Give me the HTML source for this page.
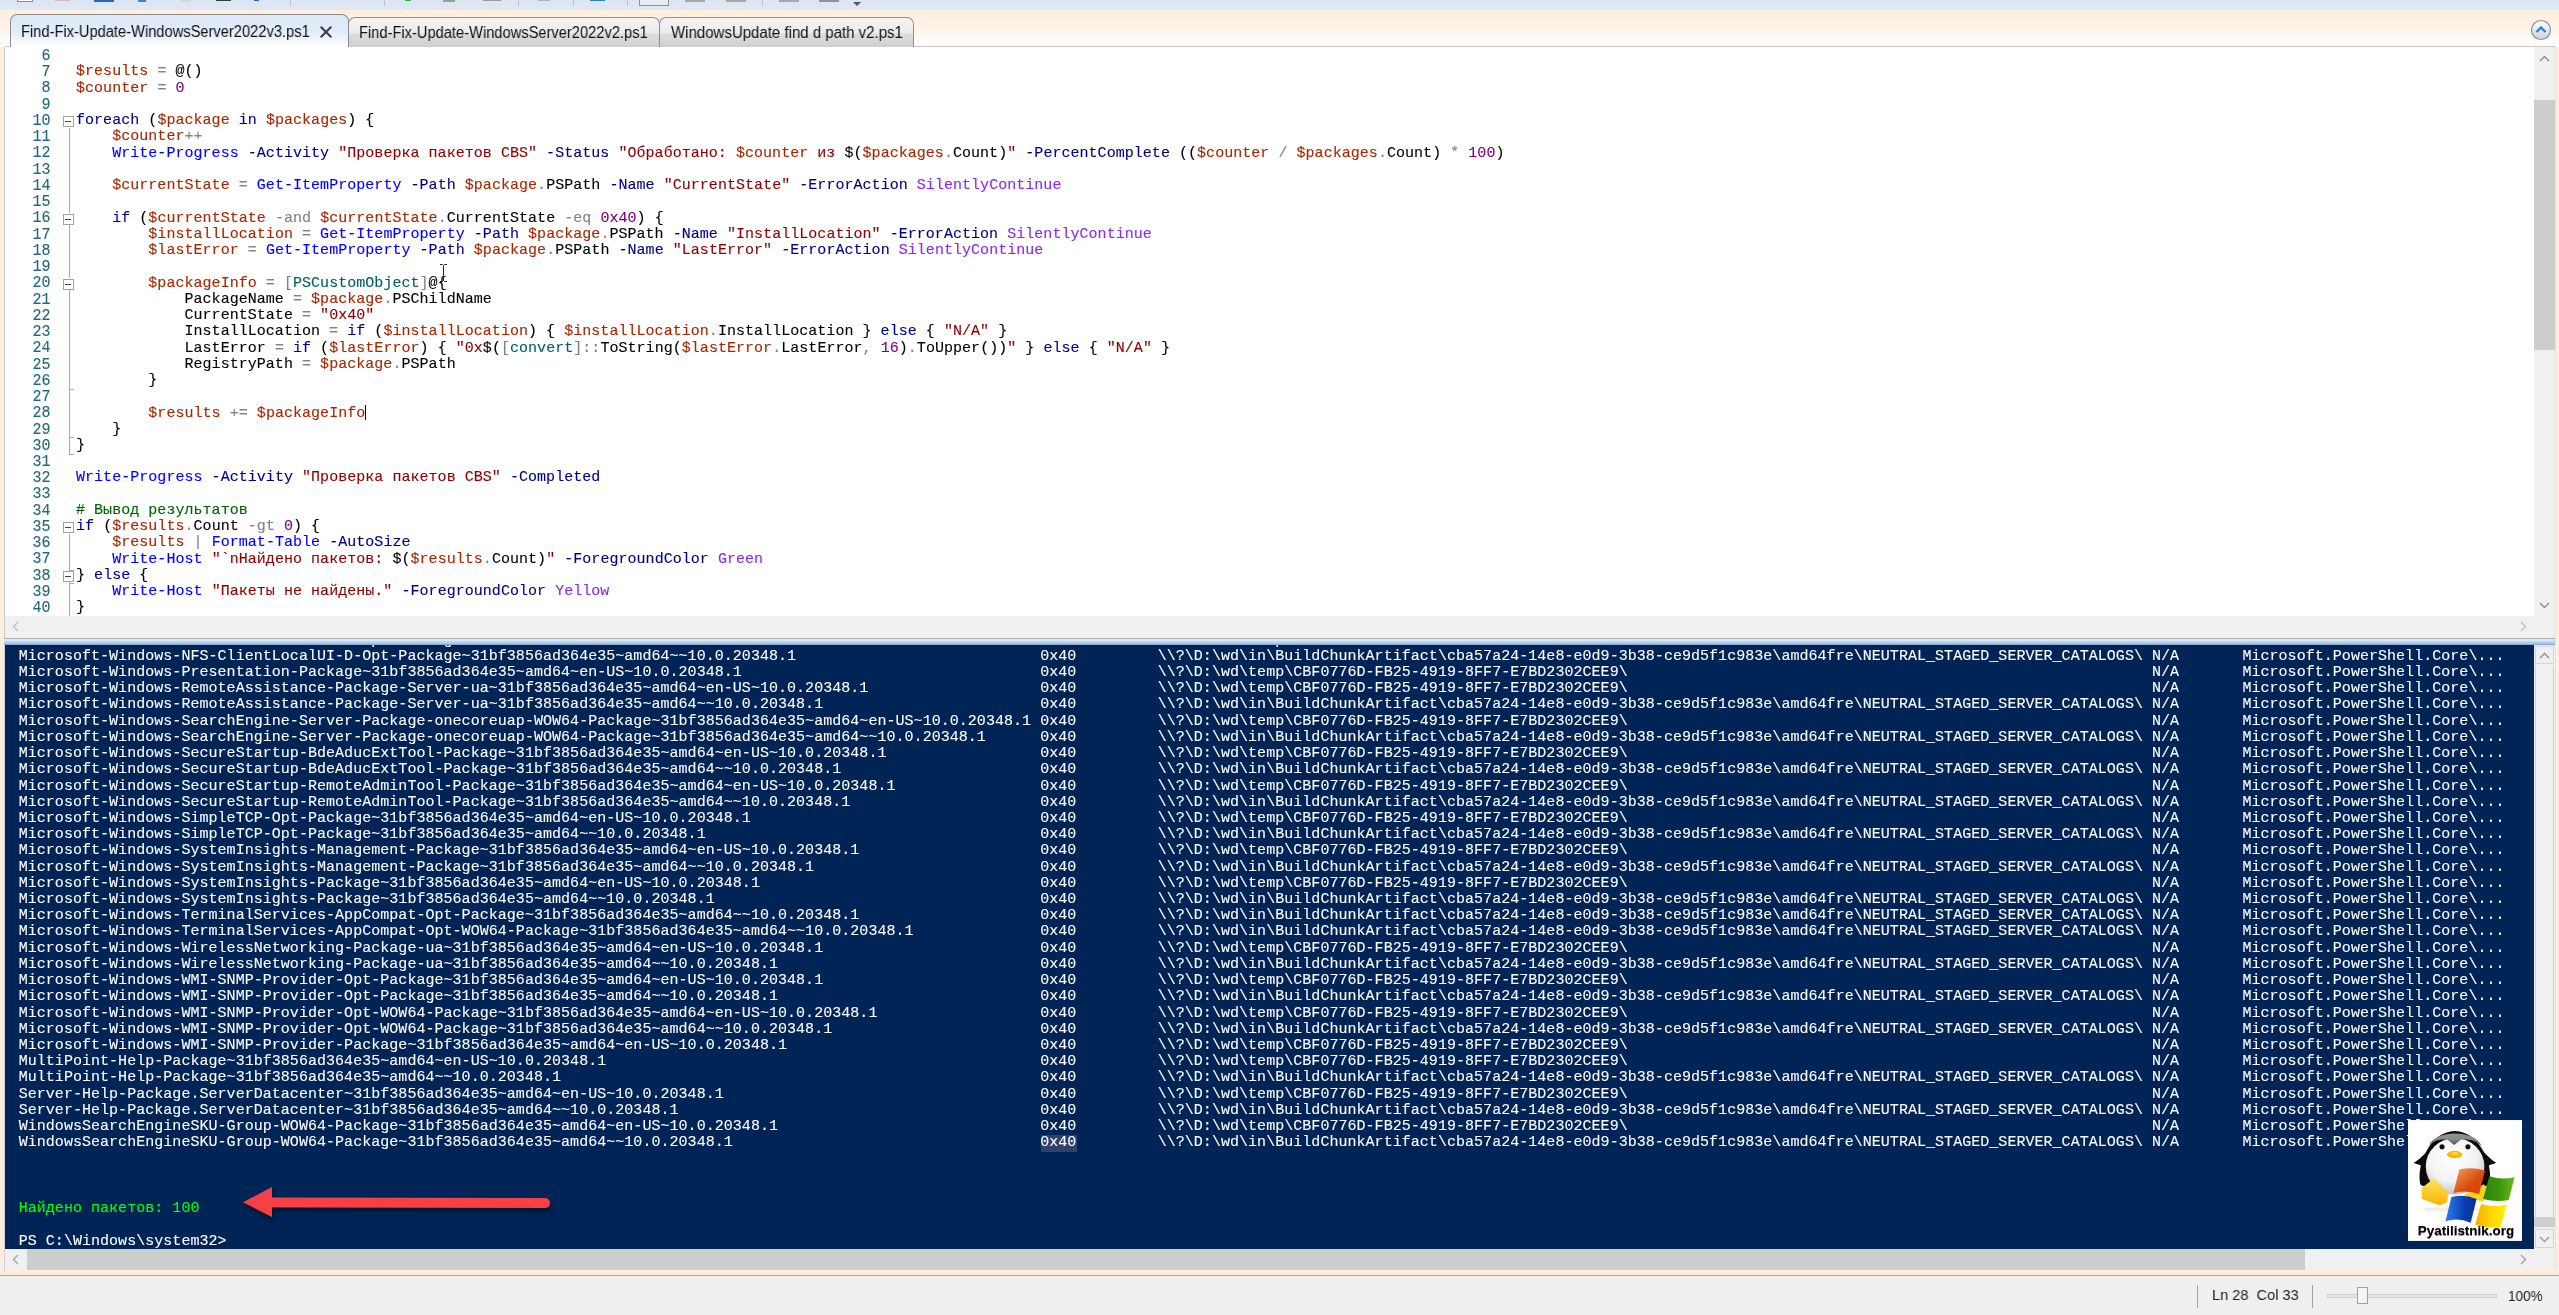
<!DOCTYPE html>
<html><head><meta charset="utf-8"><title>Windows PowerShell ISE</title>
<style>
*{box-sizing:border-box;margin:0;padding:0}
html,body{width:2559px;height:1315px;overflow:hidden;background:#fdeee0;font-family:"Liberation Sans",sans-serif}
#root{position:absolute;left:0;top:0;width:2559px;height:1315px;overflow:hidden;background:#fdeee0}
.abs{position:absolute}
/* toolbar remnant */
#tb{position:absolute;left:0;top:0;width:2559px;height:10px;background:linear-gradient(#dbe5f3,#dfe8f5)}
#tabs{position:absolute;left:0;top:10px;width:2559px;height:37px;background:linear-gradient(#feeedd 0%,#fef3e8 45%,#fffaf5 80%,#ffffff 100%)}
#tabline{position:absolute;left:5px;top:46px;width:2551px;height:1px;background:#c9c9c9}
.tab{position:absolute;border:1px solid #8e8e96;border-bottom:none;border-radius:7px 7px 0 0}
.tt{will-change:transform;position:absolute;font:16px/18px "Liberation Sans",sans-serif;color:#111;white-space:pre;transform-origin:0 0;display:block}
#t1{left:10px;top:14px;width:339px;height:33px;background:linear-gradient(#dce7f7 0%,#e3ecf9 55%,#ffffff 100%);border-color:#8c8c90}
#t2{left:348px;top:17px;width:312px;height:30px;background:linear-gradient(#f3f3f4 0%,#ececed 50%,#dddddd 56%,#cfcfcf 100%)}
#t3{left:659px;top:17px;width:255px;height:30px;background:linear-gradient(#f3f3f4 0%,#ececed 50%,#dddddd 56%,#cfcfcf 100%)}
.tab span{position:absolute;white-space:pre}
/* editor */
#ed{position:absolute;left:5px;top:47px;width:2529px;height:569px;background:#fff}
#edl{position:absolute;left:4px;top:47px;width:1px;height:592px;background:#c8c8c8}
.sbv{position:absolute;left:2534px;width:21px;background:#f0f0f0}
.sbh{position:absolute;left:5px;height:21px;background:#f0f0f0}
.thumb{position:absolute;background:#cdcdcd}
#cotext{top:645px !important;height:604px !important}
#edtext,#cotext{-webkit-text-stroke:0.12px;will-change:transform;position:absolute;left:0;top:0;width:2534px;height:616px;overflow:hidden;font:15px/16px "Liberation Mono",monospace;letter-spacing:0.0380px;white-space:pre}
.ln{position:absolute;left:0;width:50.5px;text-align:right;color:#20687f;height:16px;transform:scaleY(1.07);transform-origin:0 12.3px}
.el{position:absolute;left:76.00px;color:#000;height:16px}
i{font-style:normal}
.k{color:#00008b}.v{color:#a42900}.o{color:#828282}.c{color:#0000ff}.p{color:#000080}.s{color:#8b0000}.n{color:#800080}.t{color:#006161}.m{color:#006400}.a{color:#8a2be2}
.fb{position:absolute;left:63px;width:11px;height:11px;border:1px solid #a3a3a3;background:#fff}
.fb b{position:absolute;left:1px;top:4px;width:6px;height:1px;background:#444}
.fv{position:absolute;left:69px;width:1px;background:#a8a8a8}
.ft{position:absolute;left:69px;width:5px;height:1px;background:#a8a8a8}
#caret{position:absolute;width:1.4px;height:15px;background:#000}
#ibeam{position:absolute;left:439px;top:264px}
/* splitter */
#sp{position:absolute;left:4px;top:638px;width:2552px;height:7px;background:linear-gradient(#b1ada7 0,#b1ada7 14%,#dde9f5 15%,#d6e5f6 45%,#abcbf0 58%,#a9c9ef 85%,#6f86aa 100%)}
/* console */
#co{position:absolute;left:5px;top:645px;width:2529px;height:604px;background:#012456}
.cl{position:absolute;left:0;height:16px;color:#fbfbfb}
.cc{position:absolute;top:0;height:16px}
.gr{color:#00ff00}
#hl{position:absolute;left:1041px;top:1135px;width:36px;height:17px;background:#2f416a}
/* status */
#st{position:absolute;left:0;top:1275px;width:2559px;height:40px;background:#efefef;border-top:1px solid #a9a9a9;font-size:15.5px;color:#1e1e1e}
</style></head><body><div id="root">
<div id="tb">
 <div class="abs" style="left:17px;top:0;width:16px;height:2px;border:1px solid #8c8c8c;border-top:none;background:#fff"></div>
 <div class="abs" style="left:55px;top:0;width:15px;height:1px;background:#d9b9b9"></div>
 <div class="abs" style="left:94px;top:0;width:20px;height:2px;background:#2f64b8"></div>
 <div class="abs" style="left:138px;top:0;width:8px;height:2px;background:#3c86d8"></div>
 <div class="abs" style="left:181px;top:0;width:10px;height:2px;background:#d8d8d8"></div>
 <div class="abs" style="left:216px;top:0;width:15px;height:1px;background:#3a3a3a"></div>
 <div class="abs" style="left:254px;top:0;width:5px;height:1px;background:#2a62c0"></div>
 <div class="abs" style="left:290px;top:0;width:1px;height:6px;background:#b9c3d3"></div>
 <div class="abs" style="left:384px;top:0;width:1px;height:6px;background:#b9c3d3"></div>
 <div class="abs" style="left:405px;top:0;width:6px;height:1px;background:#37b24a"></div>
 <div class="abs" style="left:443px;top:0;width:12px;height:2px;background:#8aa893"></div>
 <div class="abs" style="left:483px;top:0;width:18px;height:1px;background:#9a9a9a"></div>
 <div class="abs" style="left:518px;top:0;width:1px;height:6px;background:#b9c3d3"></div>
 <div class="abs" style="left:538px;top:0;width:12px;height:1px;background:#a9b3c3"></div>
 <div class="abs" style="left:573px;top:0;width:1px;height:6px;background:#b9c3d3"></div>
 <div class="abs" style="left:590px;top:0;width:15px;height:1px;background:#2a7fc9"></div>
 <div class="abs" style="left:627px;top:0;width:1px;height:6px;background:#b9c3d3"></div>
 <div class="abs" style="left:639px;top:0;width:30px;height:6px;border:1px solid #8f8f8f;border-top:none;background:#e9eef6"></div>
 <div class="abs" style="left:685px;top:0;width:20px;height:2px;background:#a8a8a8"></div>
 <div class="abs" style="left:726px;top:0;width:20px;height:2px;background:#a8a8a8"></div>
 <div class="abs" style="left:762px;top:0;width:1px;height:6px;background:#b9c3d3"></div>
 <div class="abs" style="left:779px;top:0;width:20px;height:2px;background:#a8a8a8"></div>
 <div class="abs" style="left:819px;top:0;width:20px;height:2px;background:#8f8f9f"></div>
 <div class="abs" style="left:853px;top:2px;width:0;height:0;border:4px solid transparent;border-top:4px solid #555;border-bottom:none"></div>
</div>
<div id="tabs"></div>
<div id="tabline"></div>
<div class="tab" id="t3"></div><div class="tab" id="t2"></div><div class="tab" id="t1"></div>
<div class="tt" style="left:20.7px;top:23.1px;transform:scaleX(.917)">Find-Fix-Update-WindowsServer2022v3.ps1</div>
<div class="tt" style="left:358.5px;top:24.2px;transform:scaleX(.917)">Find-Fix-Update-WindowsServer2022v2.ps1</div>
<div class="tt" style="left:670.7px;top:24.2px;transform:scaleX(.938)">WindowsUpdate find d path v2.ps1</div>
<svg class="abs" style="left:319px;top:24.5px" width="14" height="14" viewBox="0 0 14 14"><path d="M1.7 1.7l10.6 10.6M12.3 1.7l-10.6 10.6" stroke="#3c3c3c" stroke-width="2" fill="none"/></svg>
<svg class="abs" style="left:2529px;top:18px" width="24" height="24" viewBox="0 0 24 24"><defs><linearGradient id="gb" x1="0" y1="0" x2="0" y2="1"><stop offset="0" stop-color="#fdfdfd"/><stop offset="1" stop-color="#cfd2d6"/></linearGradient></defs><circle cx="12" cy="12" r="9.5" fill="url(#gb)" stroke="#8a8d92" stroke-width="1.2"/><path d="M7.5 14l4.5-4.5 4.5 4.5" fill="none" stroke="#2f7fd6" stroke-width="2.4"/></svg>
<div id="ed"></div><div id="edl"></div>
<div class="sbv" style="top:47px;height:569px"><div class="thumb" style="left:0;top:53px;width:21px;height:250px"></div>
<svg class="abs" style="left:5px;top:8px" width="11" height="7" viewBox="0 0 11 7"><path d="M1 6l4.5-4.5L10 6" fill="none" stroke="#8a8a8a" stroke-width="1.3"/></svg>
<svg class="abs" style="left:5px;top:555px" width="11" height="7" viewBox="0 0 11 7"><path d="M1 1l4.5 4.5L10 1" fill="none" stroke="#8a8a8a" stroke-width="1.3"/></svg></div>
<div class="sbh" style="top:616px;width:2550px;height:22px">
<svg class="abs" style="left:7px;top:5px" width="7" height="11" viewBox="0 0 7 11"><path d="M6 1L1.5 5.5 6 10" fill="none" stroke="#bfbfbf" stroke-width="1.3"/></svg>
<svg class="abs" style="left:2515px;top:5px" width="7" height="11" viewBox="0 0 7 11"><path d="M1 1l4.5 4.5L1 10" fill="none" stroke="#bfbfbf" stroke-width="1.3"/></svg></div>
<div id="sp"></div>
<div id="co"></div><div id="hl"></div>
<div id="edtext">
<div class="ln" style="top:49.00px">6</div>
<div class="ln" style="top:65.24px">7</div>
<div class="el" style="top:64.49px"><i class="v">$results</i> <i class="o">=</i> @()</div>
<div class="ln" style="top:81.48px">8</div>
<div class="el" style="top:80.73px"><i class="v">$counter</i> <i class="o">=</i> <i class="n">0</i></div>
<div class="ln" style="top:97.72px">9</div>
<div class="ln" style="top:113.96px">10</div>
<div class="el" style="top:113.21px"><i class="k">foreach</i> (<i class="v">$package</i> <i class="k">in</i> <i class="v">$packages</i>) {</div>
<div class="ln" style="top:130.20px">11</div>
<div class="el" style="top:129.45px">    <i class="v">$counter</i><i class="o">++</i></div>
<div class="ln" style="top:146.44px">12</div>
<div class="el" style="top:145.69px">    <i class="c">Write-Progress</i> <i class="p">-Activity</i> <i class="s">"Проверка пакетов CBS"</i> <i class="p">-Status</i> <i class="s">"Обработано: </i><i class="v">$counter</i><i class="s"> из </i>$(<i class="v">$packages</i><i class="o">.</i>Count)<i class="s">"</i> <i class="p">-PercentComplete</i> ((<i class="v">$counter</i> <i class="o">/</i> <i class="v">$packages</i><i class="o">.</i>Count) <i class="o">*</i> <i class="n">100</i>)</div>
<div class="ln" style="top:162.68px">13</div>
<div class="ln" style="top:178.92px">14</div>
<div class="el" style="top:178.17px">    <i class="v">$currentState</i> <i class="o">=</i> <i class="c">Get-ItemProperty</i> <i class="p">-Path</i> <i class="v">$package</i><i class="o">.</i>PSPath <i class="p">-Name</i> <i class="s">"CurrentState"</i> <i class="p">-ErrorAction</i> <i class="a">SilentlyContinue</i></div>
<div class="ln" style="top:195.16px">15</div>
<div class="ln" style="top:211.40px">16</div>
<div class="el" style="top:210.65px">    <i class="k">if</i> (<i class="v">$currentState</i> <i class="o">-and</i> <i class="v">$currentState</i><i class="o">.</i>CurrentState <i class="o">-eq</i> <i class="n">0x40</i>) {</div>
<div class="ln" style="top:227.64px">17</div>
<div class="el" style="top:226.89px">        <i class="v">$installLocation</i> <i class="o">=</i> <i class="c">Get-ItemProperty</i> <i class="p">-Path</i> <i class="v">$package</i><i class="o">.</i>PSPath <i class="p">-Name</i> <i class="s">"InstallLocation"</i> <i class="p">-ErrorAction</i> <i class="a">SilentlyContinue</i></div>
<div class="ln" style="top:243.88px">18</div>
<div class="el" style="top:243.13px">        <i class="v">$lastError</i> <i class="o">=</i> <i class="c">Get-ItemProperty</i> <i class="p">-Path</i> <i class="v">$package</i><i class="o">.</i>PSPath <i class="p">-Name</i> <i class="s">"LastError"</i> <i class="p">-ErrorAction</i> <i class="a">SilentlyContinue</i></div>
<div class="ln" style="top:260.12px">19</div>
<div class="ln" style="top:276.36px">20</div>
<div class="el" style="top:275.61px">        <i class="v">$packageInfo</i> <i class="o">=</i> <i class="o">[</i><i class="t">PSCustomObject</i><i class="o">]</i>@{</div>
<div class="ln" style="top:292.60px">21</div>
<div class="el" style="top:291.85px">            PackageName <i class="o">=</i> <i class="v">$package</i><i class="o">.</i>PSChildName</div>
<div class="ln" style="top:308.84px">22</div>
<div class="el" style="top:308.09px">            CurrentState <i class="o">=</i> <i class="s">"0x40"</i></div>
<div class="ln" style="top:325.08px">23</div>
<div class="el" style="top:324.33px">            InstallLocation <i class="o">=</i> <i class="k">if</i> (<i class="v">$installLocation</i>) { <i class="v">$installLocation</i><i class="o">.</i>InstallLocation } <i class="k">else</i> { <i class="s">"N/A"</i> }</div>
<div class="ln" style="top:341.32px">24</div>
<div class="el" style="top:340.57px">            LastError <i class="o">=</i> <i class="k">if</i> (<i class="v">$lastError</i>) { <i class="s">"0x</i>$(<i class="o">[</i><i class="t">convert</i><i class="o">]::</i>ToString(<i class="v">$lastError</i><i class="o">.</i>LastError<i class="o">,</i> <i class="n">16</i>)<i class="o">.</i>ToUpper())<i class="s">"</i> } <i class="k">else</i> { <i class="s">"N/A"</i> }</div>
<div class="ln" style="top:357.56px">25</div>
<div class="el" style="top:356.81px">            RegistryPath <i class="o">=</i> <i class="v">$package</i><i class="o">.</i>PSPath</div>
<div class="ln" style="top:373.80px">26</div>
<div class="el" style="top:373.05px">        }</div>
<div class="ln" style="top:390.04px">27</div>
<div class="ln" style="top:406.28px">28</div>
<div class="el" style="top:405.53px">        <i class="v">$results</i> <i class="o">+=</i> <i class="v">$packageInfo</i></div>
<div class="ln" style="top:422.52px">29</div>
<div class="el" style="top:421.77px">    }</div>
<div class="ln" style="top:438.76px">30</div>
<div class="el" style="top:438.01px">}</div>
<div class="ln" style="top:455.00px">31</div>
<div class="ln" style="top:471.24px">32</div>
<div class="el" style="top:470.49px"><i class="c">Write-Progress</i> <i class="p">-Activity</i> <i class="s">"Проверка пакетов CBS"</i> <i class="p">-Completed</i></div>
<div class="ln" style="top:487.48px">33</div>
<div class="ln" style="top:503.72px">34</div>
<div class="el" style="top:502.97px"><i class="m"># Вывод результатов</i></div>
<div class="ln" style="top:519.96px">35</div>
<div class="el" style="top:519.21px"><i class="k">if</i> (<i class="v">$results</i><i class="o">.</i>Count <i class="o">-gt</i> <i class="n">0</i>) {</div>
<div class="ln" style="top:536.20px">36</div>
<div class="el" style="top:535.45px">    <i class="v">$results</i> <i class="o">|</i> <i class="c">Format-Table</i> <i class="p">-AutoSize</i></div>
<div class="ln" style="top:552.44px">37</div>
<div class="el" style="top:551.69px">    <i class="c">Write-Host</i> <i class="s">"`nНайдено пакетов: </i>$(<i class="v">$results</i><i class="o">.</i>Count)<i class="s">"</i> <i class="p">-ForegroundColor</i> <i class="a">Green</i></div>
<div class="ln" style="top:568.68px">38</div>
<div class="el" style="top:567.93px">} <i class="k">else</i> {</div>
<div class="ln" style="top:584.92px">39</div>
<div class="el" style="top:584.17px">    <i class="c">Write-Host</i> <i class="s">"Пакеты не найдены."</i> <i class="p">-ForegroundColor</i> <i class="a">Yellow</i></div>
<div class="ln" style="top:601.16px">40</div>
<div class="el" style="top:600.41px">}</div>
</div>
<div id="fold"><div class="fb" style="top:116px"><b></b></div><div class="fb" style="top:214px"><b></b></div><div class="fb" style="top:279px"><b></b></div><div class="fb" style="top:522px"><b></b></div><div class="fb" style="top:571px"><b></b></div><div class="fv" style="top:128px;height:85px"></div><div class="fv" style="top:225px;height:53px"></div><div class="fv" style="top:290px;height:164px"></div><div class="ft" style="top:389px"></div><div class="ft" style="top:437px"></div><div class="ft" style="top:454px"></div><div class="fv" style="top:534px;height:36px"></div><div class="ft" style="top:570px"></div><div class="ft" style="top:583px"></div><div class="fv" style="top:582px;height:34px"></div></div>
<div id="caret" style="left:364.7px;top:405px"></div>
<svg id="ibeam" width="9" height="18" viewBox="0 0 9 18"><path d="M1 .5h2.5l1 1 1-1H8M1 17.5h2.5l1-1 1 1H8M4.5 1.5v15" fill="none" stroke="#222" stroke-width="1"/></svg>
<div id="cotext">
<div class="cl" style="top:-12.42px"><span class="cc" style="left:18.70px">Microsoft-Windows-NFS-ClientLocalUI-D-Opt-Package~31bf3856ad364e35~amd64~en-US~10.0.20348.1</span><span class="cc" style="left:1040.16px">0x40</span><span class="cc" style="left:1157.68px">\\?\D:\wd\temp\CBF0776D-FB25-4919-8FF7-E7BD2302CEE9\</span><span class="cc" style="left:2152.02px">N/A</span><span class="cc" style="left:2242.42px">Microsoft.PowerShell.Core\...</span></div>
<div class="cl" style="top:3.80px"><span class="cc" style="left:18.70px">Microsoft-Windows-NFS-ClientLocalUI-D-Opt-Package~31bf3856ad364e35~amd64~~10.0.20348.1</span><span class="cc" style="left:1040.16px">0x40</span><span class="cc" style="left:1157.68px">\\?\D:\wd\in\BuildChunkArtifact\cba57a24-14e8-e0d9-3b38-ce9d5f1c983e\amd64fre\NEUTRAL_STAGED_SERVER_CATALOGS\</span><span class="cc" style="left:2152.02px">N/A</span><span class="cc" style="left:2242.42px">Microsoft.PowerShell.Core\...</span></div>
<div class="cl" style="top:20.01px"><span class="cc" style="left:18.70px">Microsoft-Windows-Presentation-Package~31bf3856ad364e35~amd64~en-US~10.0.20348.1</span><span class="cc" style="left:1040.16px">0x40</span><span class="cc" style="left:1157.68px">\\?\D:\wd\temp\CBF0776D-FB25-4919-8FF7-E7BD2302CEE9\</span><span class="cc" style="left:2152.02px">N/A</span><span class="cc" style="left:2242.42px">Microsoft.PowerShell.Core\...</span></div>
<div class="cl" style="top:36.23px"><span class="cc" style="left:18.70px">Microsoft-Windows-RemoteAssistance-Package-Server-ua~31bf3856ad364e35~amd64~en-US~10.0.20348.1</span><span class="cc" style="left:1040.16px">0x40</span><span class="cc" style="left:1157.68px">\\?\D:\wd\temp\CBF0776D-FB25-4919-8FF7-E7BD2302CEE9\</span><span class="cc" style="left:2152.02px">N/A</span><span class="cc" style="left:2242.42px">Microsoft.PowerShell.Core\...</span></div>
<div class="cl" style="top:52.44px"><span class="cc" style="left:18.70px">Microsoft-Windows-RemoteAssistance-Package-Server-ua~31bf3856ad364e35~amd64~~10.0.20348.1</span><span class="cc" style="left:1040.16px">0x40</span><span class="cc" style="left:1157.68px">\\?\D:\wd\in\BuildChunkArtifact\cba57a24-14e8-e0d9-3b38-ce9d5f1c983e\amd64fre\NEUTRAL_STAGED_SERVER_CATALOGS\</span><span class="cc" style="left:2152.02px">N/A</span><span class="cc" style="left:2242.42px">Microsoft.PowerShell.Core\...</span></div>
<div class="cl" style="top:68.66px"><span class="cc" style="left:18.70px">Microsoft-Windows-SearchEngine-Server-Package-onecoreuap-WOW64-Package~31bf3856ad364e35~amd64~en-US~10.0.20348.1</span><span class="cc" style="left:1040.16px">0x40</span><span class="cc" style="left:1157.68px">\\?\D:\wd\temp\CBF0776D-FB25-4919-8FF7-E7BD2302CEE9\</span><span class="cc" style="left:2152.02px">N/A</span><span class="cc" style="left:2242.42px">Microsoft.PowerShell.Core\...</span></div>
<div class="cl" style="top:84.88px"><span class="cc" style="left:18.70px">Microsoft-Windows-SearchEngine-Server-Package-onecoreuap-WOW64-Package~31bf3856ad364e35~amd64~~10.0.20348.1</span><span class="cc" style="left:1040.16px">0x40</span><span class="cc" style="left:1157.68px">\\?\D:\wd\in\BuildChunkArtifact\cba57a24-14e8-e0d9-3b38-ce9d5f1c983e\amd64fre\NEUTRAL_STAGED_SERVER_CATALOGS\</span><span class="cc" style="left:2152.02px">N/A</span><span class="cc" style="left:2242.42px">Microsoft.PowerShell.Core\...</span></div>
<div class="cl" style="top:101.09px"><span class="cc" style="left:18.70px">Microsoft-Windows-SecureStartup-BdeAducExtTool-Package~31bf3856ad364e35~amd64~en-US~10.0.20348.1</span><span class="cc" style="left:1040.16px">0x40</span><span class="cc" style="left:1157.68px">\\?\D:\wd\temp\CBF0776D-FB25-4919-8FF7-E7BD2302CEE9\</span><span class="cc" style="left:2152.02px">N/A</span><span class="cc" style="left:2242.42px">Microsoft.PowerShell.Core\...</span></div>
<div class="cl" style="top:117.30px"><span class="cc" style="left:18.70px">Microsoft-Windows-SecureStartup-BdeAducExtTool-Package~31bf3856ad364e35~amd64~~10.0.20348.1</span><span class="cc" style="left:1040.16px">0x40</span><span class="cc" style="left:1157.68px">\\?\D:\wd\in\BuildChunkArtifact\cba57a24-14e8-e0d9-3b38-ce9d5f1c983e\amd64fre\NEUTRAL_STAGED_SERVER_CATALOGS\</span><span class="cc" style="left:2152.02px">N/A</span><span class="cc" style="left:2242.42px">Microsoft.PowerShell.Core\...</span></div>
<div class="cl" style="top:133.52px"><span class="cc" style="left:18.70px">Microsoft-Windows-SecureStartup-RemoteAdminTool-Package~31bf3856ad364e35~amd64~en-US~10.0.20348.1</span><span class="cc" style="left:1040.16px">0x40</span><span class="cc" style="left:1157.68px">\\?\D:\wd\temp\CBF0776D-FB25-4919-8FF7-E7BD2302CEE9\</span><span class="cc" style="left:2152.02px">N/A</span><span class="cc" style="left:2242.42px">Microsoft.PowerShell.Core\...</span></div>
<div class="cl" style="top:149.73px"><span class="cc" style="left:18.70px">Microsoft-Windows-SecureStartup-RemoteAdminTool-Package~31bf3856ad364e35~amd64~~10.0.20348.1</span><span class="cc" style="left:1040.16px">0x40</span><span class="cc" style="left:1157.68px">\\?\D:\wd\in\BuildChunkArtifact\cba57a24-14e8-e0d9-3b38-ce9d5f1c983e\amd64fre\NEUTRAL_STAGED_SERVER_CATALOGS\</span><span class="cc" style="left:2152.02px">N/A</span><span class="cc" style="left:2242.42px">Microsoft.PowerShell.Core\...</span></div>
<div class="cl" style="top:165.95px"><span class="cc" style="left:18.70px">Microsoft-Windows-SimpleTCP-Opt-Package~31bf3856ad364e35~amd64~en-US~10.0.20348.1</span><span class="cc" style="left:1040.16px">0x40</span><span class="cc" style="left:1157.68px">\\?\D:\wd\temp\CBF0776D-FB25-4919-8FF7-E7BD2302CEE9\</span><span class="cc" style="left:2152.02px">N/A</span><span class="cc" style="left:2242.42px">Microsoft.PowerShell.Core\...</span></div>
<div class="cl" style="top:182.16px"><span class="cc" style="left:18.70px">Microsoft-Windows-SimpleTCP-Opt-Package~31bf3856ad364e35~amd64~~10.0.20348.1</span><span class="cc" style="left:1040.16px">0x40</span><span class="cc" style="left:1157.68px">\\?\D:\wd\in\BuildChunkArtifact\cba57a24-14e8-e0d9-3b38-ce9d5f1c983e\amd64fre\NEUTRAL_STAGED_SERVER_CATALOGS\</span><span class="cc" style="left:2152.02px">N/A</span><span class="cc" style="left:2242.42px">Microsoft.PowerShell.Core\...</span></div>
<div class="cl" style="top:198.38px"><span class="cc" style="left:18.70px">Microsoft-Windows-SystemInsights-Management-Package~31bf3856ad364e35~amd64~en-US~10.0.20348.1</span><span class="cc" style="left:1040.16px">0x40</span><span class="cc" style="left:1157.68px">\\?\D:\wd\temp\CBF0776D-FB25-4919-8FF7-E7BD2302CEE9\</span><span class="cc" style="left:2152.02px">N/A</span><span class="cc" style="left:2242.42px">Microsoft.PowerShell.Core\...</span></div>
<div class="cl" style="top:214.59px"><span class="cc" style="left:18.70px">Microsoft-Windows-SystemInsights-Management-Package~31bf3856ad364e35~amd64~~10.0.20348.1</span><span class="cc" style="left:1040.16px">0x40</span><span class="cc" style="left:1157.68px">\\?\D:\wd\in\BuildChunkArtifact\cba57a24-14e8-e0d9-3b38-ce9d5f1c983e\amd64fre\NEUTRAL_STAGED_SERVER_CATALOGS\</span><span class="cc" style="left:2152.02px">N/A</span><span class="cc" style="left:2242.42px">Microsoft.PowerShell.Core\...</span></div>
<div class="cl" style="top:230.81px"><span class="cc" style="left:18.70px">Microsoft-Windows-SystemInsights-Package~31bf3856ad364e35~amd64~en-US~10.0.20348.1</span><span class="cc" style="left:1040.16px">0x40</span><span class="cc" style="left:1157.68px">\\?\D:\wd\temp\CBF0776D-FB25-4919-8FF7-E7BD2302CEE9\</span><span class="cc" style="left:2152.02px">N/A</span><span class="cc" style="left:2242.42px">Microsoft.PowerShell.Core\...</span></div>
<div class="cl" style="top:247.02px"><span class="cc" style="left:18.70px">Microsoft-Windows-SystemInsights-Package~31bf3856ad364e35~amd64~~10.0.20348.1</span><span class="cc" style="left:1040.16px">0x40</span><span class="cc" style="left:1157.68px">\\?\D:\wd\in\BuildChunkArtifact\cba57a24-14e8-e0d9-3b38-ce9d5f1c983e\amd64fre\NEUTRAL_STAGED_SERVER_CATALOGS\</span><span class="cc" style="left:2152.02px">N/A</span><span class="cc" style="left:2242.42px">Microsoft.PowerShell.Core\...</span></div>
<div class="cl" style="top:263.24px"><span class="cc" style="left:18.70px">Microsoft-Windows-TerminalServices-AppCompat-Opt-Package~31bf3856ad364e35~amd64~~10.0.20348.1</span><span class="cc" style="left:1040.16px">0x40</span><span class="cc" style="left:1157.68px">\\?\D:\wd\in\BuildChunkArtifact\cba57a24-14e8-e0d9-3b38-ce9d5f1c983e\amd64fre\NEUTRAL_STAGED_SERVER_CATALOGS\</span><span class="cc" style="left:2152.02px">N/A</span><span class="cc" style="left:2242.42px">Microsoft.PowerShell.Core\...</span></div>
<div class="cl" style="top:279.45px"><span class="cc" style="left:18.70px">Microsoft-Windows-TerminalServices-AppCompat-Opt-WOW64-Package~31bf3856ad364e35~amd64~~10.0.20348.1</span><span class="cc" style="left:1040.16px">0x40</span><span class="cc" style="left:1157.68px">\\?\D:\wd\in\BuildChunkArtifact\cba57a24-14e8-e0d9-3b38-ce9d5f1c983e\amd64fre\NEUTRAL_STAGED_SERVER_CATALOGS\</span><span class="cc" style="left:2152.02px">N/A</span><span class="cc" style="left:2242.42px">Microsoft.PowerShell.Core\...</span></div>
<div class="cl" style="top:295.67px"><span class="cc" style="left:18.70px">Microsoft-Windows-WirelessNetworking-Package-ua~31bf3856ad364e35~amd64~en-US~10.0.20348.1</span><span class="cc" style="left:1040.16px">0x40</span><span class="cc" style="left:1157.68px">\\?\D:\wd\temp\CBF0776D-FB25-4919-8FF7-E7BD2302CEE9\</span><span class="cc" style="left:2152.02px">N/A</span><span class="cc" style="left:2242.42px">Microsoft.PowerShell.Core\...</span></div>
<div class="cl" style="top:311.88px"><span class="cc" style="left:18.70px">Microsoft-Windows-WirelessNetworking-Package-ua~31bf3856ad364e35~amd64~~10.0.20348.1</span><span class="cc" style="left:1040.16px">0x40</span><span class="cc" style="left:1157.68px">\\?\D:\wd\in\BuildChunkArtifact\cba57a24-14e8-e0d9-3b38-ce9d5f1c983e\amd64fre\NEUTRAL_STAGED_SERVER_CATALOGS\</span><span class="cc" style="left:2152.02px">N/A</span><span class="cc" style="left:2242.42px">Microsoft.PowerShell.Core\...</span></div>
<div class="cl" style="top:328.10px"><span class="cc" style="left:18.70px">Microsoft-Windows-WMI-SNMP-Provider-Opt-Package~31bf3856ad364e35~amd64~en-US~10.0.20348.1</span><span class="cc" style="left:1040.16px">0x40</span><span class="cc" style="left:1157.68px">\\?\D:\wd\temp\CBF0776D-FB25-4919-8FF7-E7BD2302CEE9\</span><span class="cc" style="left:2152.02px">N/A</span><span class="cc" style="left:2242.42px">Microsoft.PowerShell.Core\...</span></div>
<div class="cl" style="top:344.31px"><span class="cc" style="left:18.70px">Microsoft-Windows-WMI-SNMP-Provider-Opt-Package~31bf3856ad364e35~amd64~~10.0.20348.1</span><span class="cc" style="left:1040.16px">0x40</span><span class="cc" style="left:1157.68px">\\?\D:\wd\in\BuildChunkArtifact\cba57a24-14e8-e0d9-3b38-ce9d5f1c983e\amd64fre\NEUTRAL_STAGED_SERVER_CATALOGS\</span><span class="cc" style="left:2152.02px">N/A</span><span class="cc" style="left:2242.42px">Microsoft.PowerShell.Core\...</span></div>
<div class="cl" style="top:360.53px"><span class="cc" style="left:18.70px">Microsoft-Windows-WMI-SNMP-Provider-Opt-WOW64-Package~31bf3856ad364e35~amd64~en-US~10.0.20348.1</span><span class="cc" style="left:1040.16px">0x40</span><span class="cc" style="left:1157.68px">\\?\D:\wd\temp\CBF0776D-FB25-4919-8FF7-E7BD2302CEE9\</span><span class="cc" style="left:2152.02px">N/A</span><span class="cc" style="left:2242.42px">Microsoft.PowerShell.Core\...</span></div>
<div class="cl" style="top:376.74px"><span class="cc" style="left:18.70px">Microsoft-Windows-WMI-SNMP-Provider-Opt-WOW64-Package~31bf3856ad364e35~amd64~~10.0.20348.1</span><span class="cc" style="left:1040.16px">0x40</span><span class="cc" style="left:1157.68px">\\?\D:\wd\in\BuildChunkArtifact\cba57a24-14e8-e0d9-3b38-ce9d5f1c983e\amd64fre\NEUTRAL_STAGED_SERVER_CATALOGS\</span><span class="cc" style="left:2152.02px">N/A</span><span class="cc" style="left:2242.42px">Microsoft.PowerShell.Core\...</span></div>
<div class="cl" style="top:392.96px"><span class="cc" style="left:18.70px">Microsoft-Windows-WMI-SNMP-Provider-Package~31bf3856ad364e35~amd64~en-US~10.0.20348.1</span><span class="cc" style="left:1040.16px">0x40</span><span class="cc" style="left:1157.68px">\\?\D:\wd\temp\CBF0776D-FB25-4919-8FF7-E7BD2302CEE9\</span><span class="cc" style="left:2152.02px">N/A</span><span class="cc" style="left:2242.42px">Microsoft.PowerShell.Core\...</span></div>
<div class="cl" style="top:409.17px"><span class="cc" style="left:18.70px">MultiPoint-Help-Package~31bf3856ad364e35~amd64~en-US~10.0.20348.1</span><span class="cc" style="left:1040.16px">0x40</span><span class="cc" style="left:1157.68px">\\?\D:\wd\temp\CBF0776D-FB25-4919-8FF7-E7BD2302CEE9\</span><span class="cc" style="left:2152.02px">N/A</span><span class="cc" style="left:2242.42px">Microsoft.PowerShell.Core\...</span></div>
<div class="cl" style="top:425.39px"><span class="cc" style="left:18.70px">MultiPoint-Help-Package~31bf3856ad364e35~amd64~~10.0.20348.1</span><span class="cc" style="left:1040.16px">0x40</span><span class="cc" style="left:1157.68px">\\?\D:\wd\in\BuildChunkArtifact\cba57a24-14e8-e0d9-3b38-ce9d5f1c983e\amd64fre\NEUTRAL_STAGED_SERVER_CATALOGS\</span><span class="cc" style="left:2152.02px">N/A</span><span class="cc" style="left:2242.42px">Microsoft.PowerShell.Core\...</span></div>
<div class="cl" style="top:441.61px"><span class="cc" style="left:18.70px">Server-Help-Package.ServerDatacenter~31bf3856ad364e35~amd64~en-US~10.0.20348.1</span><span class="cc" style="left:1040.16px">0x40</span><span class="cc" style="left:1157.68px">\\?\D:\wd\temp\CBF0776D-FB25-4919-8FF7-E7BD2302CEE9\</span><span class="cc" style="left:2152.02px">N/A</span><span class="cc" style="left:2242.42px">Microsoft.PowerShell.Core\...</span></div>
<div class="cl" style="top:457.82px"><span class="cc" style="left:18.70px">Server-Help-Package.ServerDatacenter~31bf3856ad364e35~amd64~~10.0.20348.1</span><span class="cc" style="left:1040.16px">0x40</span><span class="cc" style="left:1157.68px">\\?\D:\wd\in\BuildChunkArtifact\cba57a24-14e8-e0d9-3b38-ce9d5f1c983e\amd64fre\NEUTRAL_STAGED_SERVER_CATALOGS\</span><span class="cc" style="left:2152.02px">N/A</span><span class="cc" style="left:2242.42px">Microsoft.PowerShell.Core\...</span></div>
<div class="cl" style="top:474.03px"><span class="cc" style="left:18.70px">WindowsSearchEngineSKU-Group-WOW64-Package~31bf3856ad364e35~amd64~en-US~10.0.20348.1</span><span class="cc" style="left:1040.16px">0x40</span><span class="cc" style="left:1157.68px">\\?\D:\wd\temp\CBF0776D-FB25-4919-8FF7-E7BD2302CEE9\</span><span class="cc" style="left:2152.02px">N/A</span><span class="cc" style="left:2242.42px">Microsoft.PowerShell.Core\...</span></div>
<div class="cl" style="top:490.25px"><span class="cc" style="left:18.70px">WindowsSearchEngineSKU-Group-WOW64-Package~31bf3856ad364e35~amd64~~10.0.20348.1</span><span class="cc" style="left:1040.16px">0x40</span><span class="cc" style="left:1157.68px">\\?\D:\wd\in\BuildChunkArtifact\cba57a24-14e8-e0d9-3b38-ce9d5f1c983e\amd64fre\NEUTRAL_STAGED_SERVER_CATALOGS\</span><span class="cc" style="left:2152.02px">N/A</span><span class="cc" style="left:2242.42px">Microsoft.PowerShell.Core\...</span></div>
<div class="cl gr" style="top:556.11px"><span class="cc" style="left:18.70px">Найдено пакетов: 100</span></div>
<div class="cl" style="top:588.54px"><span class="cc" style="left:18.70px">PS C:\Windows\system32&gt; </span></div>
</div>
<!-- console scrollbars -->
<div class="sbv" style="top:645px;height:604px">
 <div class="abs" style="left:1px;top:1px;width:19px;height:18px;border:1px solid #cbd5e4;background:#f0f0f0"></div>
 <svg class="abs" style="left:5px;top:7px" width="11" height="7" viewBox="0 0 11 7"><path d="M1 6l4.5-4.5L10 6" fill="none" stroke="#8a8a8a" stroke-width="1.3"/></svg>
 <div class="abs" style="left:1px;top:20px;width:19px;height:563px;border-left:1px solid #cbd5e4;border-right:1px solid #cbd5e4"></div>
 <div class="thumb" style="left:0;top:572px;width:21px;height:10px;background:#cdcdcd"></div>
 <div class="abs" style="left:1px;top:584px;width:19px;height:19px;border:1px solid #cbd5e4;background:#f0f0f0"></div>
 <svg class="abs" style="left:4.5px;top:591px" width="11" height="7" viewBox="0 0 11 7"><path d="M1 1l4.5 4.5L10 1" fill="none" stroke="#a0a0a0" stroke-width="1.5"/></svg>
</div>
<div class="sbh" style="top:1249px;width:2529px">
 <div class="thumb" style="left:22px;top:0;width:2278px;height:21px;background:#cdcdcd"></div>
 <svg class="abs" style="left:7px;top:5px" width="7" height="11" viewBox="0 0 7 11"><path d="M6 1L1.5 5.5 6 10" fill="none" stroke="#a0a0a0" stroke-width="1.3"/></svg>
 <svg class="abs" style="left:2515px;top:5px" width="7" height="11" viewBox="0 0 7 11"><path d="M1 1l4.5 4.5L1 10" fill="none" stroke="#a0a0a0" stroke-width="1.3"/></svg>
</div>
<div class="abs" style="left:2534px;top:1249px;width:22px;height:21px;background:#f0f0f0"></div>
<div class="abs" style="left:2555px;top:47px;width:1px;height:1224px;background:#e3e3e3"></div>
<div class="abs" style="left:4px;top:645px;width:1px;height:626px;background:#d0d0d0"></div>
<!-- red arrow -->
<svg class="abs" style="left:230px;top:1175px" width="340" height="60" viewBox="0 0 340 60">
<defs><filter id="sh" x="-5%" y="-30%" width="110%" height="180%"><feGaussianBlur in="SourceAlpha" stdDeviation="2"/><feOffset dx="1" dy="3"/><feComponentTransfer><feFuncA type="linear" slope="0.55"/></feComponentTransfer><feMerge><feMergeNode/><feMergeNode in="SourceGraphic"/></feMerge></filter></defs>
<g filter="url(#sh)"><path d="M13 27.3 L42 12 L42 22.6 L315 23 A5 5 0 0 1 315 33 L42 32.3 L42 42 Z" fill="#f64044"/></g></svg>
<!-- logo -->
<svg class="abs" style="left:2408px;top:1120px" width="114" height="121" viewBox="0 0 1155 1225">
<defs>
<radialGradient id="belly" cx="0.45" cy="0.35" r="0.7"><stop offset="0" stop-color="#ffffff"/><stop offset="0.6" stop-color="#f2f2f2"/><stop offset="1" stop-color="#b9b9b9"/></radialGradient>
<linearGradient id="cap" x1="0" y1="0" x2="0" y2="1"><stop offset="0" stop-color="#8f8f8f"/><stop offset="0.45" stop-color="#8a8a8a"/><stop offset="1" stop-color="#444"/></linearGradient>
<linearGradient id="fr" x1="0" y1="0" x2="1" y2="1"><stop offset="0" stop-color="#f3a165"/><stop offset="0.6" stop-color="#d84a0a"/><stop offset="1" stop-color="#e23a10"/></linearGradient>
<linearGradient id="fg" x1="0" y1="0" x2="1" y2="0"><stop offset="0" stop-color="#2a8406"/><stop offset="0.5" stop-color="#3a960c"/><stop offset="1" stop-color="#6cba12"/></linearGradient>
<linearGradient id="fbl" x1="0" y1="0" x2="1" y2="0"><stop offset="0" stop-color="#2d7cf0"/><stop offset="0.6" stop-color="#0a3eb0"/><stop offset="1" stop-color="#0a2f9a"/></linearGradient>
<linearGradient id="fy" x1="0" y1="0" x2="1" y2="0"><stop offset="0" stop-color="#f2b000"/><stop offset="0.55" stop-color="#ffd800"/><stop offset="1" stop-color="#fff200"/></linearGradient>
<filter id="tsh" x="-5%" y="-20%" width="110%" height="160%"><feGaussianBlur in="SourceAlpha" stdDeviation="7"/><feOffset dx="0" dy="10"/><feComponentTransfer><feFuncA type="linear" slope="0.45"/></feComponentTransfer><feMerge><feMergeNode/><feMergeNode in="SourceGraphic"/></feMerge></filter><linearGradient id="ft2" x1="0" y1="0" x2="0" y2="1"><stop offset="0" stop-color="#ffe45a"/><stop offset="1" stop-color="#f7b500"/></linearGradient>
</defs>
<rect x="0" y="0" width="1155" height="1225" fill="#fff"/>
<!-- body -->
<ellipse cx="470" cy="905" rx="330" ry="22" fill="#f1efe6"/>
<path d="M125 650 C105 560 120 450 180 330 C240 200 350 112 475 110 C600 112 710 200 770 330 C830 450 845 560 820 650 C760 720 180 720 125 650Z" fill="#0b0b0b"/>
<path d="M58 432 C110 405 160 350 195 315 L150 480 C125 445 90 452 58 432Z" fill="#0b0b0b"/>
<path d="M892 432 C840 405 800 350 760 315 L800 480 C825 445 860 452 892 432Z" fill="#0b0b0b"/>
<ellipse cx="477" cy="470" rx="297" ry="287" fill="url(#belly)"/>
<path d="M212 262 C270 95 680 95 745 262 C690 205 600 188 535 200 L467 254 L400 200 C335 188 260 205 212 262Z" fill="url(#cap)"/>
<circle cx="345" cy="270" r="26" fill="#111"/><circle cx="607" cy="270" r="26" fill="#111"/>
<ellipse cx="472" cy="348" rx="78" ry="36" fill="#ffb400"/><ellipse cx="472" cy="338" rx="42" ry="17" fill="#ffd23a"/>
<path d="M135 690 L265 590 L410 750 L392 835 L320 862 L140 800Z" fill="url(#ft2)"/>
<path d="M560 760 L770 650 L800 700 L760 830 L640 790Z" fill="#ffd21a"/>
<!-- flag -->
<path d="M520 500 Q650 470 780 510 L720 750 Q590 705 460 740Z" fill="url(#fr)"/>
<path d="M825 570 Q950 610 1080 580 L1020 810 Q890 835 760 800Z" fill="url(#fg)"/>
<path d="M440 780 Q570 745 695 800 L635 1040 Q510 985 380 1025Z" fill="url(#fbl)"/>
<path d="M740 850 Q870 890 1000 855 L940 1080 Q810 1105 680 1060Z" fill="url(#fy)"/>
<text x="100" y="1168" font-family="Liberation Sans, sans-serif" font-weight="bold" font-size="138" textLength="975" filter="url(#tsh)" lengthAdjust="spacingAndGlyphs" fill="#000">Pyatilistnik.org</text>
</svg>
<!-- status bar -->
<div class="abs" style="left:0;top:1271px;width:2559px;height:4px;background:#fdeee0"></div>
<div id="st">
 <div class="abs" style="left:2197px;top:9px;width:1px;height:23px;background:#a0a0a0"></div>
 <div class="abs" style="left:2312px;top:9px;width:1px;height:23px;background:#a0a0a0"></div>
 <span class="abs" style="left:2212px;top:10px;white-space:pre;font:14.8px/18px 'Liberation Sans';transform-origin:0 0;transform:scaleX(.985);will-change:transform;color:#222">Ln 28  Col 33</span>
 <div class="abs" style="left:2327px;top:18px;width:170px;height:4px;background:#e4e4e4;border:1px solid #d2d2d2"></div>
 <div class="abs" style="left:2357px;top:11px;width:11px;height:17px;background:#f4f4f4;border:1px solid #a0a0a0"></div>
 <span class="abs" style="left:2507.6px;top:11px;white-space:pre;font:14.4px/18px 'Liberation Sans';transform-origin:0 0;transform:scaleX(.94);will-change:transform;color:#222">100%</span>
</div>
</div></body></html>
